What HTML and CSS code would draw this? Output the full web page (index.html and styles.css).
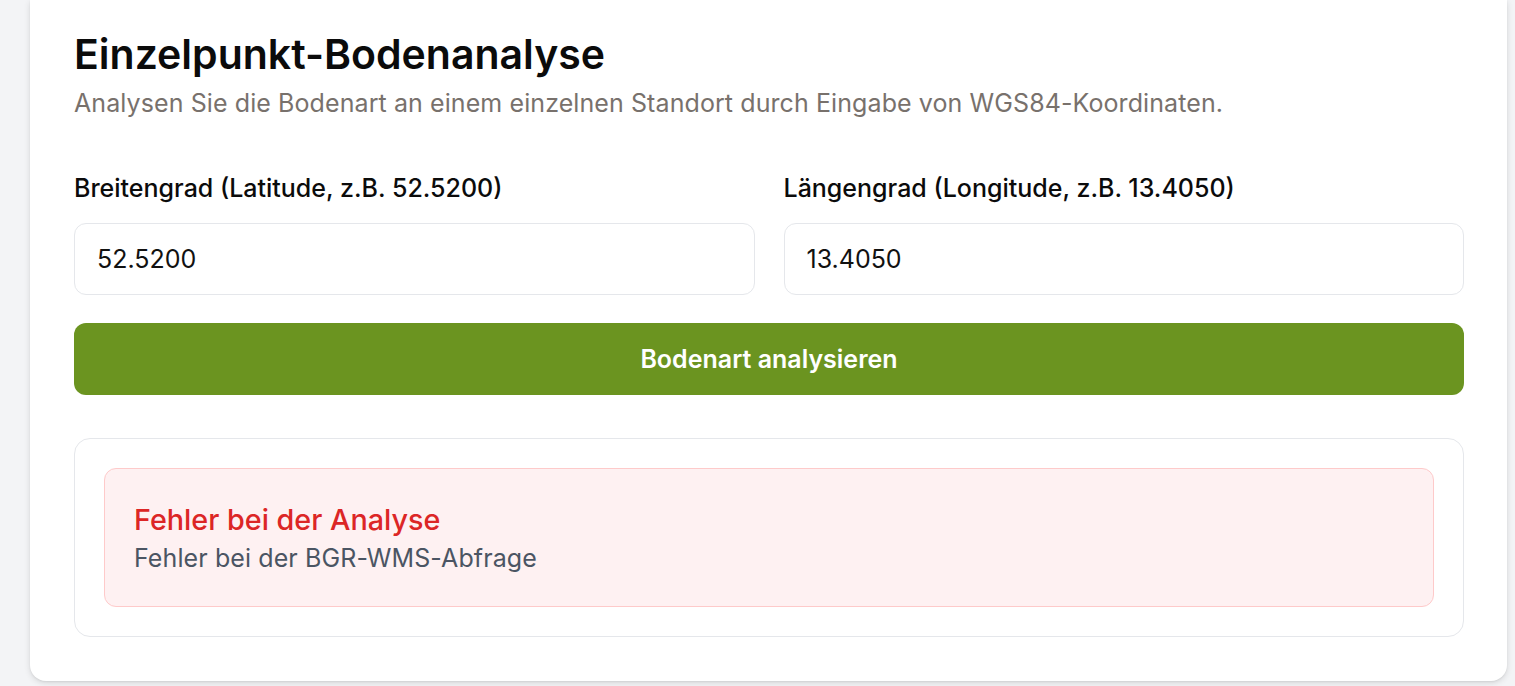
FILE: index.html
```html
<!DOCTYPE html>
<html lang="de">
<head>
<meta charset="utf-8">
<title>Einzelpunkt-Bodenanalyse</title>
<link rel="stylesheet" href="styles.css">
</head>
<body>
<main class="page">
  <section class="card">
    <h1 class="title">Einzelpunkt-Bodenanalyse</h1>
    <p class="subtitle">Analysen Sie die Bodenart an einem einzelnen Standort durch Eingabe von WGS84-Koordinaten.</p>
    <div class="fields">
      <label class="field">
        <span class="label">Breitengrad (Latitude, z.B. 52.5200)</span>
        <input class="input" type="text" value="52.5200">
      </label>
      <label class="field">
        <span class="label">Längengrad (Longitude, z.B. 13.4050)</span>
        <input class="input" type="text" value="13.4050">
      </label>
    </div>
    <button class="btn" type="button">Bodenart analysieren</button>
    <div class="result">
      <div class="error">
        <div class="error-title">Fehler bei der Analyse</div>
        <div class="error-text">Fehler bei der BGR-WMS-Abfrage</div>
      </div>
    </div>
  </section>
</main>
</body>
</html>
```
FILE: styles.css
```css
* { box-sizing: border-box; }
html, body { margin: 0; padding: 0; }
body {
  background: #f3f4f6;
  font-family: Inter, "Noto Sans", "Liberation Sans", sans-serif;
  color: #111;
  height: 686px;
  overflow: hidden;
}
.page {
  padding: 0 8px 0 30px;
}
.card {
  background: #fff;
  border-radius: 0 0 16px 16px;
  box-shadow: 0 2px 6px rgba(0,0,0,0.12), 0 1px 2px rgba(0,0,0,0.06);
  padding: 29px 43px 44px 44px;
}
.title {
  margin: 0;
  font-size: 41px;
  line-height: 50px;
  font-weight: 600;
  color: #0b0b0b;
}
.subtitle {
  margin: 8px 0 0;
  font-size: 25px;
  line-height: 32px;
  color: #78716c;
  letter-spacing: 0.09px;
}
.fields {
  display: grid;
  grid-template-columns: 1fr 1fr;
  column-gap: 29px;
  margin-top: 53px;
}
.field {
  display: flex;
  flex-direction: column;
}
.label {
  font-size: 25px;
  line-height: 32px;
  font-weight: 500;
  color: #0b0b0b;
  margin-bottom: 19px;
}
.input {
  height: 72px;
  border: 1px solid #e5e7eb;
  border-radius: 12px;
  padding: 0 22px;
  font-family: inherit;
  font-size: 25px;
  color: #111;
  background: #fff;
  outline: none;
}
.btn {
  display: block;
  width: 100%;
  height: 72px;
  margin-top: 28px;
  border: none;
  border-radius: 12px;
  background: #6b9420;
  color: #fff;
  font-family: inherit;
  font-size: 25px;
  font-weight: 600;
}
.result {
  margin-top: 43px;
  border: 1px solid #e5e7eb;
  border-radius: 16px;
  padding: 29px;
}
.error {
  background: #fef1f2;
  border: 1px solid #fecaca;
  border-radius: 12px;
  padding: 33px 29px 32px;
}
.error-title {
  color: #dc2626;
  font-size: 28.75px;
  line-height: 36px;
  font-weight: 500;
}
.error-text {
  margin-top: 4px;
  color: #4b5563;
  font-size: 25px;
  line-height: 32px;
  letter-spacing: 0.1px;
}
```
